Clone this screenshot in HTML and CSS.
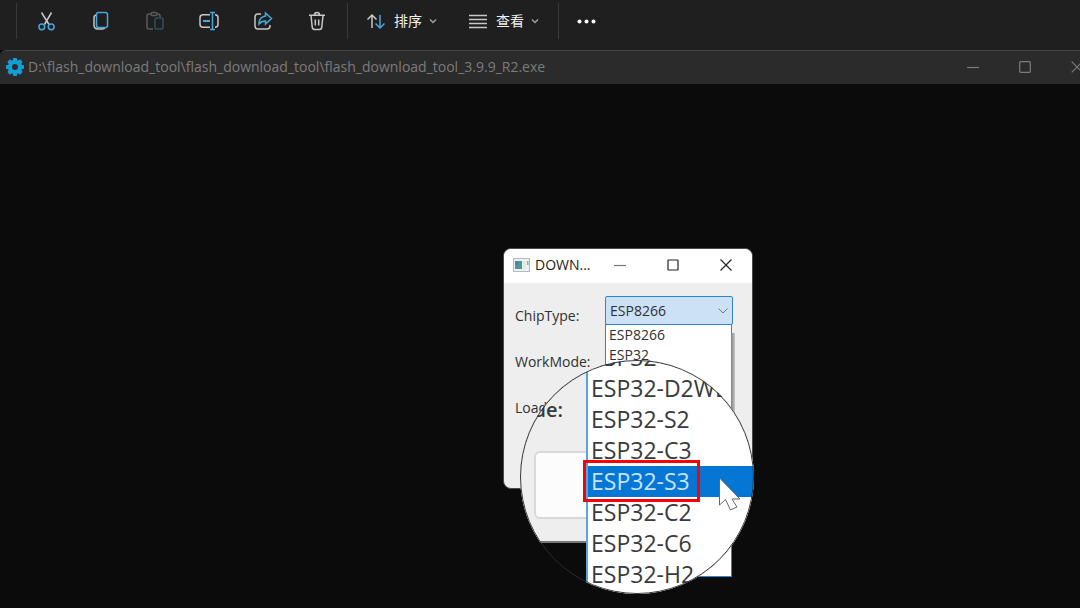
FILE: index.html
```html
<!DOCTYPE html>
<html lang="zh-CN">
<head>
<meta charset="utf-8">
<title>flash_download_tool</title>
<link rel="stylesheet" href="styles.css">
</head>
<body>
<header class="toolbar">
  <div class="group tools">
    <button class="tool" aria-label="剪切"><svg viewBox="0 0 20 20"><path class="pale" d="M4.500 1.500l7.500 12M14.500 1.500L7.500 13.500"/><circle class="blue" cx="4.800" cy="15.800" r="2.900"/><circle class="blue" cx="14.200" cy="15.800" r="2.900"/></svg></button>
    <button class="tool" aria-label="复制"><svg viewBox="0 0 20 20"><path class="pale" d="M5 4q-2 .5-2 3v7q0 4 4 4h4q2.500 0 3-1.500"/><rect class="blue" x="5.500" y="1.500" width="11" height="15" rx="2"/></svg></button>
    <button class="tool" aria-label="粘贴" disabled><svg viewBox="0 0 20 20"><path class="pale" d="M8 18H4q-2 0-2-2V5q0-2 2-2h2M12 3h1q2 0 2 2v1"/><rect class="pale" x="6" y="1.500" width="6" height="3" rx="1.500"/><rect class="blue" x="10" y="7" width="8" height="11" rx="1.500"/></svg></button>
    <button class="tool" aria-label="重命名"><svg viewBox="0 0 20 20"><path class="pale" d="M11 3.700H4Q1 3.700 1 6.700v6.600q0 3 3 3h7M16 3.700q3 0 3 3v6.600q0 3-3 3"/><path class="blue" stroke-width="2" d="M4 10h7"/><path class="blue" d="M11 1.500h5M13.500 1.500v17M11 18.500h5"/></svg></button>
    <button class="tool" aria-label="共享"><svg viewBox="0 0 20 20"><path class="pale" d="M8 3H5Q2 3 2 6v9q0 3 3 3h9q3 0 3-3v-1"/><path class="blue" d="M12.500 2l6 5.500-6 5.500v-3q-4 0-6.500 3 0-7 6.500-8z"/></svg></button>
    <button class="tool" aria-label="删除"><svg viewBox="0 0 20 20"><path class="pale" d="M2 4.200h16M7.500 4q0-2.500 2.500-2.500T12.500 4M4 4.500l1.200 11.500q.2 2.500 2.500 2.500h4.600q2.300 0 2.500-2.500L16 4.500M8.300 8.500v6M11.700 8.500v6"/></svg></button>
  </div>
  <div class="group menus">
    <button class="menu"><svg viewBox="0 0 20 20"><path class="pale" d="M6 17V4M1.500 8.500L6 4l4.500 4.500"/><path class="blue" d="M14 4v13M9.500 12.500L14 17l4.500-4.500"/></svg><span>排序</span><svg class="chevron" viewBox="0 0 8 8"><path d="M1 2.500l3 3 3-3"/></svg></button>
    <button class="menu"><svg viewBox="0 0 20 20"><path class="pale" d="M1 4.500h18M1 8.500h18M1 12.500h18M1 16.500h18"/></svg><span>查看</span><svg class="chevron" viewBox="0 0 8 8"><path d="M1 2.500l3 3 3-3"/></svg></button>
  </div>
  <div class="group more">
    <button class="tool" aria-label="更多"><svg viewBox="0 0 20 20"><g fill="#fff"><circle cx="2.500" cy="10.500" r="2"/><circle cx="9.500" cy="10.500" r="2"/><circle cx="16.500" cy="10.500" r="2"/></g></svg></button>
  </div>
</header>

<section class="console">
  <header class="console-bar">
    <svg class="gear" viewBox="1 1 18 18"><g fill="#139fd3"><circle cx="10" cy="10" r="7"/><path id="tooth" d="M8.200 1h3.600l.8 4H7.400z"/><use href="#tooth" transform="rotate(45 10 10)"/><use href="#tooth" transform="rotate(90 10 10)"/><use href="#tooth" transform="rotate(135 10 10)"/><use href="#tooth" transform="rotate(180 10 10)"/><use href="#tooth" transform="rotate(225 10 10)"/><use href="#tooth" transform="rotate(270 10 10)"/><use href="#tooth" transform="rotate(315 10 10)"/></g><circle cx="10" cy="10" r="3" fill="#2b2b2b"/></svg>
    <h1 class="console-title">D:\flash_download_tool\flash_download_tool\flash_download_tool_3.9.9_R2.exe</h1>
    <div class="console-controls">
      <button class="control" aria-label="最小化"><svg viewBox="0 0 12 12"><path d="M0 6.500h12"/></svg></button>
      <button class="control" aria-label="最大化"><svg viewBox="0 0 12 12"><rect x=".7" y=".7" width="10.600" height="10.600" rx="1"/></svg></button>
      <button class="control" aria-label="关闭"><svg viewBox="0 0 12 12"><path d="M.7.7l10.600 10.600M11.300.7L.7 11.300"/></svg></button>
    </div>
  </header>
  <main class="desktop">
    <section class="dialog">
      <header class="dialog-bar">
        <svg class="app-icon" viewBox="0 0 17 14"><rect x=".5" y=".5" width="16" height="13" fill="#eef1f4" stroke="#b4bac2"/><path fill="#4d9691" d="M2 3h7v8H2z"/><path fill="#4f83aa" d="M2 3h3v4H2z"/><path fill="#dfe6ea" d="M10 3h3v8h-3z"/><path fill="#6fbd99" d="M14 3h1.500v4H14z"/></svg>
        <h2 class="dialog-title">DOWN...</h2>
        <div class="dialog-controls">
          <button class="control thin" aria-label="最小化"><svg viewBox="0 0 12 12"><path d="M0 6.500h12"/></svg></button>
          <button class="control" aria-label="最大化"><svg viewBox="0 0 12 12"><rect x="1" y="1" width="10" height="10" rx=".5"/></svg></button>
          <button class="control" aria-label="关闭"><svg viewBox="0 0 12 12"><path d="M.5.5l11 11M11.500.5l-11 11"/></svg></button>
        </div>
      </header>
      <form class="form">
        <div class="field">
          <label for="chip">ChipType:</label>
          <div class="picker">
            <select id="chip" class="select"><option>ESP8266</option></select>
            <svg class="arrow" viewBox="0 0 10 6"><path d="M.5.5L5 5 9.500.5"/></svg>
            <ul class="options"><li>ESP8266</li><li>ESP32</li></ul>
          </div>
        </div>
        <div class="field"><span>WorkMode:</span></div>
        <div class="field"><span>Load</span></div>
      </form>
    </section>

    <div class="lens">
      <div class="lens-dialog">
        <span class="lens-label">Mode:</span>
        <div class="lens-button"></div>
      </div>
      <ul class="lens-list">
        <li>ESP32</li>
        <li>ESP32-D2WD</li>
        <li>ESP32-S2</li>
        <li>ESP32-C3</li>
        <li class="selected">ESP32-S3</li>
        <li>ESP32-C2</li>
        <li>ESP32-C6</li>
        <li>ESP32-H2</li>
      </ul>
      <div class="highlight"></div>
      <svg class="cursor" viewBox="0 0 24 36"><path d="M1.500 1v27l6-5.500 5 10.500 6.500-3-5-8h8z" fill="#fff" stroke="#666" stroke-width="1"/></svg>
    </div>
  </main>
</section>
</body>
</html>
```

FILE: styles.css
```css
* { box-sizing: border-box; }

body {
  margin: 0;
  min-height: 100vh;
  display: flex;
  flex-direction: column;
  background: #0b0b0b;
  font-family: "Open Sans", "Noto Sans CJK SC", sans-serif;
  overflow: hidden;
}

h1, h2, ul { margin: 0; padding: 0; font-weight: 400; list-style: none; }
button { padding: 0; border: 0; background: none; color: inherit; font: inherit; }
svg { display: block; fill: none; }

.toolbar {
  display: flex;
  align-items: center;
  height: 50px;
  padding: 0 16px 8px;
  background: #1f1f1f;
  color: #f2f2f2;
}
.group {
  display: flex;
  align-items: center;
  height: 36px;
  border-left: 1px solid #3a3a3a;
}
.tools { gap: 34px; padding: 0 20px; }
.menus { gap: 31px; padding: 0 19px 0 18px; }
.more { padding-left: 18px; }
.tool svg, .menu svg { width: 20px; height: 20px; stroke-width: 1.5; }
.tool:disabled { opacity: 0.35; }
.pale { stroke: #c8c8c8; }
.blue { stroke: #45a8e0; }
.menu {
  display: flex;
  align-items: center;
  gap: 7px;
  font: 14px/20px "Noto Sans CJK SC", sans-serif;
}
.menu span { padding: 0 0 2px 1px; }
.menu .chevron { width: 8px; height: 8px; stroke: #a0a0a0; }

.console { flex: 1; display: flex; flex-direction: column; }
.console-bar {
  display: flex;
  align-items: center;
  height: 34px;
  padding: 0 0 1px 6px;
  border-top: 1px solid #454545;
  border-top-left-radius: 6px;
  background: #2b2b2b;
  color: #7c7c7c;
}
.gear { width: 18px; height: 18px; margin-right: 4px; }
.console-title { font-size: 14px; line-height: 20px; }
.console-controls { display: flex; gap: 40px; margin-left: auto; margin-right: -3px; }
.control svg { width: 12px; height: 12px; stroke: currentColor; stroke-width: 1.2; }
.control.thin { color: #777777; }

.desktop { position: relative; flex: 1; }

.dialog {
  position: absolute;
  left: 503px;
  top: 164px;
  width: 250px;
  height: 241px;
  border: 1px solid #4a4a4a;
  border-radius: 8px;
  background: #eeeeee;
  color: #303030;
}
.dialog-bar {
  display: flex;
  align-items: center;
  height: 34px;
  padding: 0 20px 2px 9px;
  border-radius: 7px 7px 0 0;
  background: #ffffff;
  color: #222222;
}
.app-icon { width: 17px; height: 14px; margin-right: 5px; }
.dialog-title { font-size: 14px; line-height: 20px; }
.dialog-controls { display: flex; gap: 41px; margin-left: auto; }

.form { padding: 9px 19px 0 11px; font-size: 14px; }
.field {
  display: flex;
  align-items: center;
  justify-content: space-between;
  height: 46px;
}
.picker { position: relative; width: 128px; height: 38px; }
.select {
  display: block;
  width: 100%;
  height: 29px;
  padding: 0 4px;
  border: 1px solid #2f86cf;
  border-radius: 2px;
  appearance: none;
  background: #cce1f6;
  color: #303030;
  font: inherit;
}
.arrow { position: absolute; top: 12px; right: 5px; width: 10px; height: 6px; stroke: #6d7780; }
.options {
  position: absolute;
  top: 28px;
  left: 0;
  width: 127px;
  height: 253px;
  border: 1px solid #2f86cf;
  background: #ffffff;
  line-height: 20px;
}
.options::after {
  content: "";
  position: absolute;
  top: 8px;
  left: 100%;
  width: 4px;
  height: 120px;
  background: linear-gradient(to right, #808080, #c8c8c8);
}
.options li { padding-left: 3px; }

.lens {
  position: absolute;
  left: 520px;
  top: 276px;
  width: 234px;
  height: 234px;
  display: flex;
  border-radius: 50%;
  background: #0b0b0b;
  overflow: hidden;
  color: #3a3a3a;
}
.lens::after {
  content: "";
  position: absolute;
  inset: 0;
  border: 1px solid #30303a;
  border-radius: 50%;
}
.lens-dialog {
  width: 66px;
  height: 183px;
  padding: 36px 0 0 14px;
  border-bottom: 2px solid #777777;
  background: #eeeeee;
}
.lens-label {
  display: flex;
  justify-content: flex-end;
  width: 29px;
  font-size: 20px;
  font-weight: 600;
  line-height: 28px;
}
.lens-button {
  height: 68px;
  margin-top: 27px;
  border: 2px solid #d8d8d8;
  border-right: 0;
  border-radius: 6px 0 0 6px;
  background: #fcfcfc;
}
.lens-list {
  flex: 1;
  height: 270px;
  margin-top: -18px;
  border-left: 2px solid #5aa5dc;
  background: #ffffff;
  font-size: 23px;
  font-weight: 500;
  line-height: 31px;
  white-space: nowrap;
}
.lens-list li { padding-left: 3px; }
.lens-list .selected { background: #0676d5; color: #c4e4ff; }
.highlight {
  position: absolute;
  left: 63px;
  top: 100px;
  width: 117px;
  height: 42px;
  border: 3px solid #fb0007;
}
.cursor { position: absolute; left: 198px; top: 117px; width: 24px; height: 36px; }
```
